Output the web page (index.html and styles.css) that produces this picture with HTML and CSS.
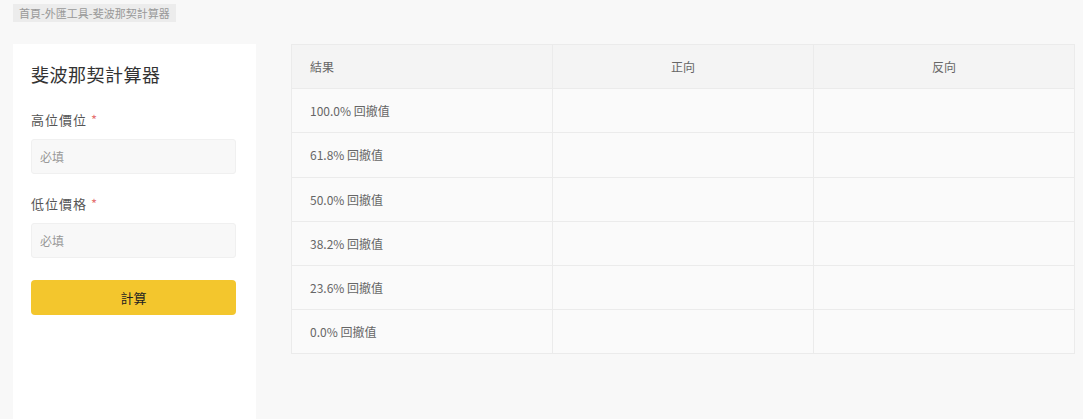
FILE: index.html
```html
<!DOCTYPE html>
<html lang="zh-Hant">
<head>
  <meta charset="UTF-8">
  <meta name="viewport" content="width=device-width, initial-scale=1.0">
  <title>斐波那契計算器</title>
  <link rel="stylesheet" href="styles.css">
</head>
<body>
  <div class="crumb">首頁-外匯工具-斐波那契計算器</div>

  <div class="main">
    <div class="panel">
      <h2>斐波那契計算器</h2>

      <div class="form-group">
        <label for="highPrice">高位價位 <span class="req">*</span></label>
        <input type="text" id="highPrice" placeholder="必填">
      </div>

      <div class="form-group">
        <label for="lowPrice">低位價格 <span class="req">*</span></label>
        <input type="text" id="lowPrice" placeholder="必填">
      </div>

      <button id="calc">計算</button>
    </div>

    <div class="result-wrap">
      <table class="result">
        <thead>
          <tr>
            <th>結果</th>
            <th class="center">正向</th>
            <th class="center">反向</th>
          </tr>
        </thead>
        <tbody>
          <tr><td>100.0% 回撤值</td><td></td><td></td></tr>
          <tr><td>61.8% 回撤值</td><td></td><td></td></tr>
          <tr><td>50.0% 回撤值</td><td></td><td></td></tr>
          <tr><td>38.2% 回撤值</td><td></td><td></td></tr>
          <tr><td>23.6% 回撤值</td><td></td><td></td></tr>
          <tr><td>0.0% 回撤值</td><td></td><td></td></tr>
        </tbody>
      </table>
    </div>
  </div>
</body>
</html>
```

FILE: styles.css
```css
html, body {
  height: 100%;
}
body {
  font-family: "Noto Sans CJK TC", "Noto Sans", sans-serif;
  margin: 0;
  padding: 4px 8px 0 13px;
  box-sizing: border-box;
  background: #f8f8f8;
  color: #333;
  display: flex;
  flex-direction: column;
}
.crumb {
  align-self: flex-start;
  background: #ececec;
  color: #999;
  font-size: 11px;
  line-height: 18px;
  padding: 0 6px;
}
.main {
  flex: 1;
  display: flex;
  align-items: flex-start;
  gap: 35px;
  margin-top: 22px;
}
.panel {
  width: 243px;
  flex-shrink: 0;
  align-self: stretch;
  background: #fff;
  padding: 18px 20px 0 18px;
  box-sizing: border-box;
}
.panel h2 {
  margin: 0 0 25px;
  font-size: 18px;
  font-weight: 400;
  line-height: 24px;
  color: #333;
  letter-spacing: 0.5px;
}
.form-group {
  margin-bottom: 21px;
}
label {
  display: block;
  font-size: 13px;
  line-height: 18px;
  color: #555;
  margin-bottom: 10px;
  letter-spacing: 1px;
}
.req {
  color: #e57373;
}
input[type="text"] {
  display: block;
  width: 100%;
  height: 35px;
  box-sizing: border-box;
  padding: 0 8px;
  border: 1px solid #f0f0f0;
  border-radius: 3px;
  background: #f8f8f8;
  font-family: inherit;
  font-size: 12px;
  color: #333;
}
input::placeholder {
  color: #999;
}
button {
  display: block;
  width: 100%;
  height: 35px;
  margin-top: 22px;
  border: none;
  border-radius: 4px;
  background: #f3c62d;
  color: #222;
  font-family: inherit;
  font-size: 13px;
  font-weight: 400;
  cursor: pointer;
}
.result-wrap {
  flex: 1;
}
.result {
  width: 100%;
  border-collapse: collapse;
  table-layout: fixed;
  background: #fafafa;
  font-size: 12px;
  color: #666;
}
.result th,
.result td {
  border: 1px solid #ebebeb;
  height: 44.2px;
  padding: 0 18px;
  text-align: left;
  font-weight: 400;
  box-sizing: border-box;
}
.result th {
  width: 33.33%;
  background: #f4f4f4;
}
.result .center {
  text-align: center;
}
```
